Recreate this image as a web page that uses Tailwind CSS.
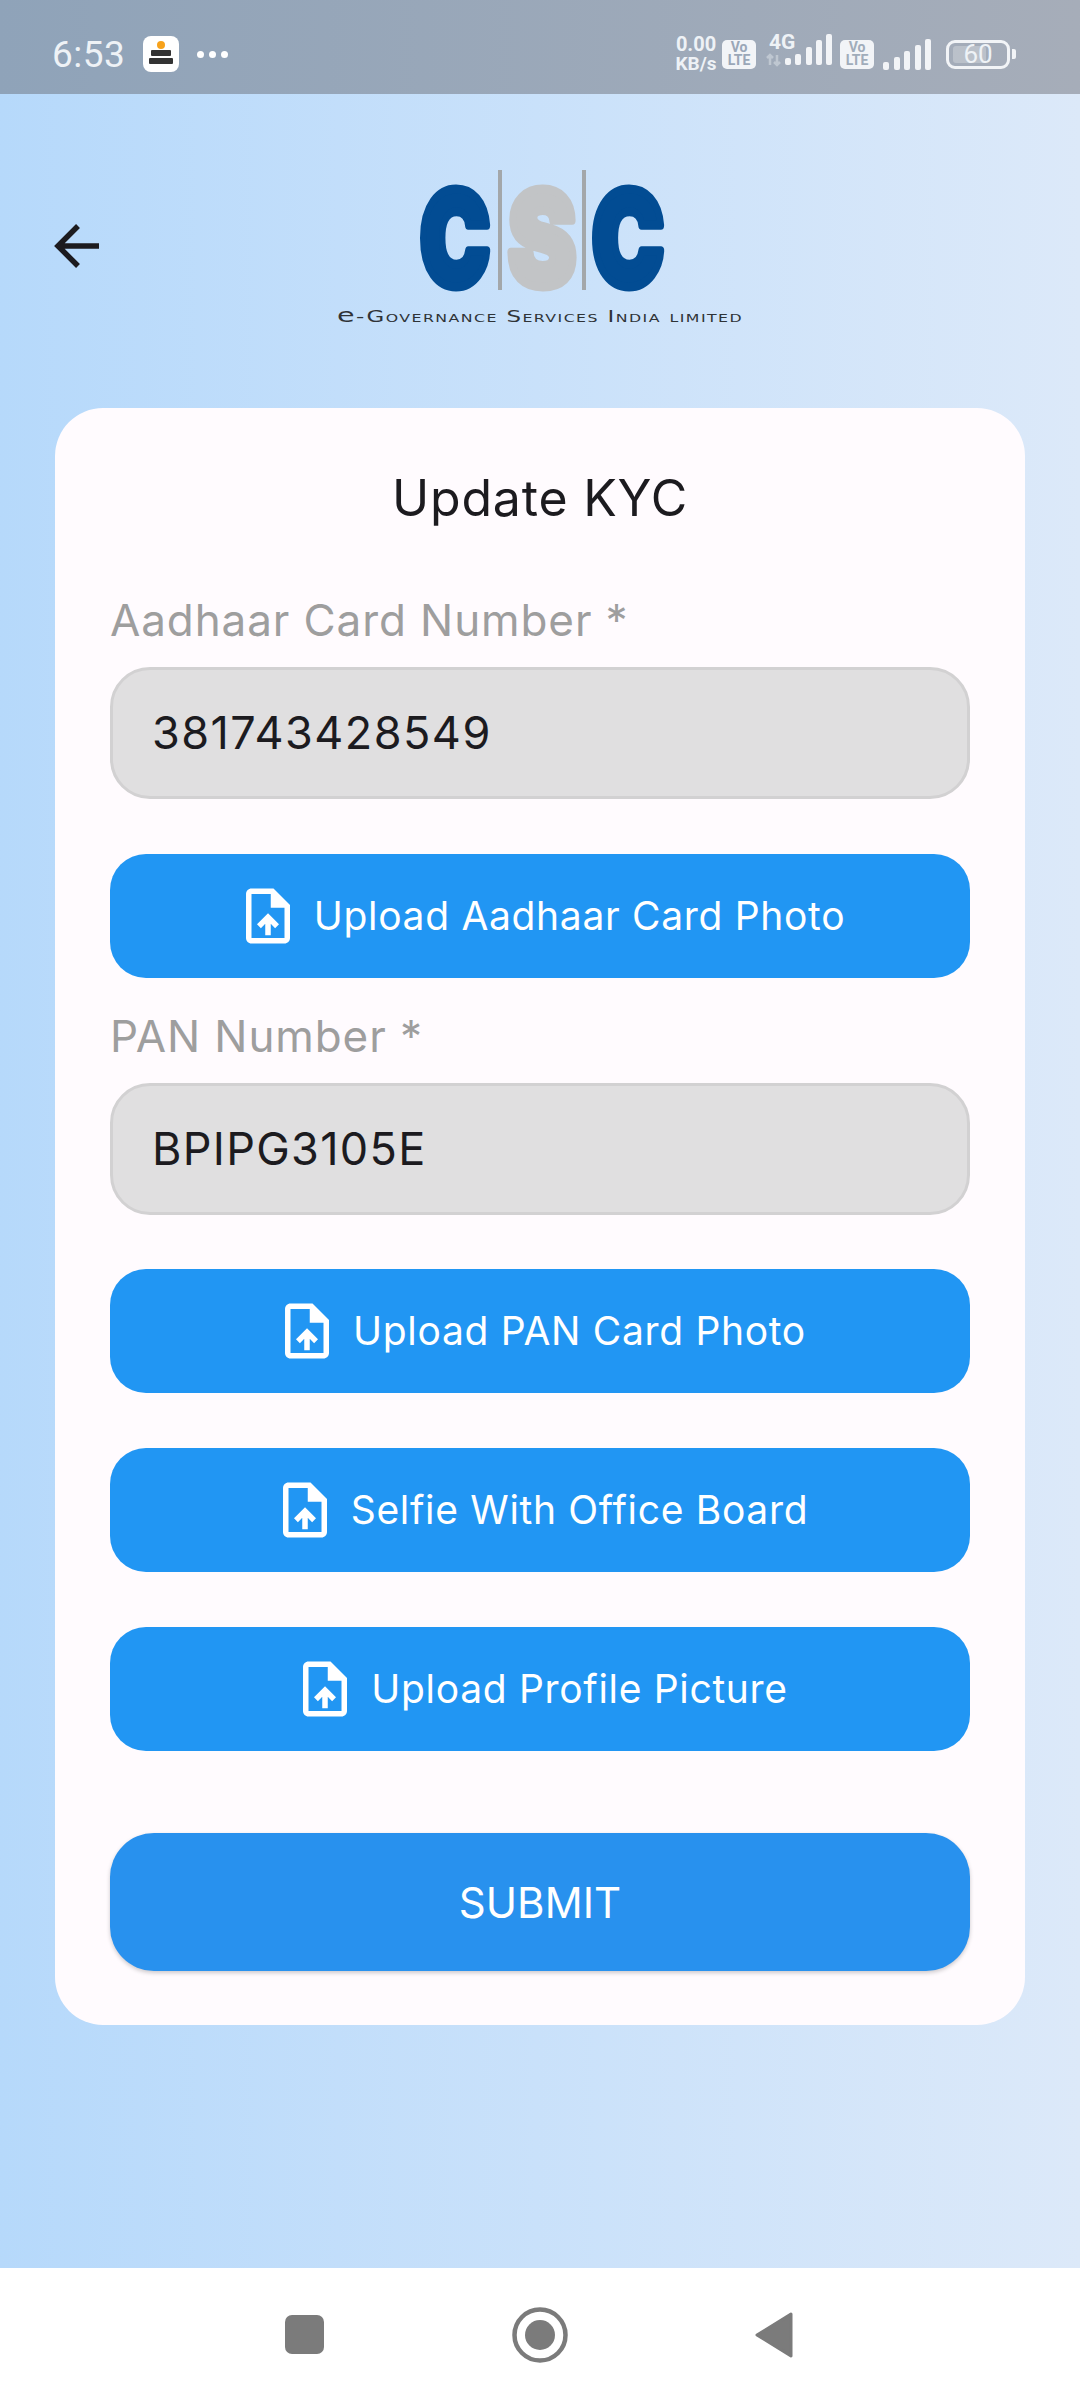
<!DOCTYPE html>
<html lang="en">
<head>
    <meta charset="UTF-8">
    <meta name="viewport" content="width=device-width, initial-scale=1.0">
    <title>Update KYC</title>
    <script src="https://cdn.jsdelivr.net/npm/@tailwindcss/browser@4"></script>
</head>
<body class="w-[1080px] h-[2400px] overflow-hidden flex flex-col bg-white font-['Inter',sans-serif]">

    <!-- Status bar -->
    <div class="h-[94px] shrink-0 flex items-center justify-between pt-[14px] pl-[52px] pr-[64px] bg-gradient-to-r from-[#8fa3b9] to-[#a6adb9] text-[#eef2f6]">
        <div class="flex items-center">
            <span class="text-[37px] leading-none font-['Roboto',sans-serif] tracking-[0.5px]">6:53</span>
            <div class="ml-[18px] w-[36px] h-[36px] rounded-[8px] bg-white flex flex-col items-center pt-[5px]">
                <div class="w-[8px] h-[8px] rounded-full bg-[#f7a21b]"></div>
                <div class="w-[20px] h-[6px] mt-[1px] bg-[#333] rounded-[1px]"></div>
                <div class="w-[24px] h-[6px] mt-[2px] bg-[#333] rounded-[1px]"></div>
            </div>
            <div class="ml-[18px] flex gap-[5px]">
                <div class="w-[7px] h-[7px] rounded-full bg-white"></div>
                <div class="w-[7px] h-[7px] rounded-full bg-white"></div>
                <div class="w-[7px] h-[7px] rounded-full bg-white"></div>
            </div>
        </div>
        <div class="flex items-center">
            <div class="flex flex-col items-center font-['Roboto',sans-serif] font-bold text-[20px] leading-[19px] w-[44px]">
                <span>0.00</span>
                <span class="text-[19px]">KB/s</span>
            </div>
            <div class="ml-[4px] w-[34px] h-[29px] rounded-[5px] bg-[#f2f4f7] flex flex-col items-center justify-center text-[#9aa7b8] text-[14px] leading-[13px] font-bold font-['Roboto',sans-serif]">
                <span>Vo</span><span>LTE</span>
            </div>
            <div class="relative ml-[9px] w-[76px] h-[40px]">
                <span class="absolute left-[4px] top-[-2px] text-[21px] leading-none font-bold font-['Roboto',sans-serif]">4G</span>
                <svg class="absolute left-0 top-0" width="76" height="40" viewBox="0 0 76 40">
                    <path d="M5 31V21M2 24l3-3 3 3M12 21v10M9 28l3 3 3-3" stroke="#eef2f6" stroke-opacity="0.4" stroke-width="2.5" fill="none"/>
                    <g fill="#f2f4f7">
                        <rect x="20" y="24" width="6" height="7" rx="2"/>
                        <rect x="30" y="20" width="6" height="11" rx="2"/>
                        <rect x="41" y="13" width="6" height="18" rx="2"/>
                        <rect x="51" y="6" width="6" height="25" rx="2"/>
                        <rect x="61" y="0" width="6" height="31" rx="2"/>
                    </g>
                </svg>
            </div>
            <div class="ml-[-1px] w-[34px] h-[29px] rounded-[5px] bg-[#f2f4f7] flex flex-col items-center justify-center text-[#a0acba] text-[14px] leading-[13px] font-bold font-['Roboto',sans-serif]">
                <span>Vo</span><span>LTE</span>
            </div>
            <svg class="ml-[9px]" width="49" height="31" viewBox="0 0 49 31">
                <g fill="#f2f4f7">
                    <rect x="0" y="23" width="6" height="8" rx="2"/>
                    <rect x="11" y="18" width="6" height="13" rx="2"/>
                    <rect x="21" y="12" width="6" height="19" rx="2"/>
                    <rect x="32" y="6" width="6" height="25" rx="2"/>
                    <rect x="42" y="0" width="6" height="31" rx="2"/>
                </g>
            </svg>
            <div class="ml-[14px] relative w-[64px] h-[29px] rounded-[9px] border-[3px] border-[#f2f4f7] flex items-center justify-center">
                <div class="absolute left-[4px] top-[3px] bottom-[3px] w-[33px] rounded-[3px] bg-white/25"></div>
                <span class="relative text-[26px] leading-none font-['Roboto',sans-serif]">60</span>
            </div>
            <div class="ml-[2px] w-[4px] h-[10px] rounded-r-[2px] bg-[#f2f4f7]"></div>
        </div>
    </div>

    <!-- Page -->
    <div class="h-[2174px] shrink-0 bg-gradient-to-r from-[#b6d9fb] to-[#dce9f9] flex flex-col">
        <!-- Header with logo -->
        <div class="relative h-[314px] shrink-0">
            <svg class="absolute left-[53px] top-[130px]" width="48" height="44" viewBox="0 0 48 44" fill="none" stroke="#1c1b1f" stroke-width="5.5">
                <path d="M46 22H7M25 2L5 22l20 20"/>
            </svg>
            <svg class="absolute left-[330px] top-[70px]" width="420" height="170" viewBox="0 0 420 170">
                <g font-family="'Inter',sans-serif" font-weight="900" font-size="88" stroke-width="6" stroke-linejoin="round">
                    <text transform="translate(90 122) scale(1 1.5)" textLength="70" lengthAdjust="spacingAndGlyphs" fill="#024c93" stroke="#024c93">C</text>
                    <text transform="translate(178 122) scale(1 1.5)" textLength="68" lengthAdjust="spacingAndGlyphs" fill="#c2c4c6" stroke="#c2c4c6">S</text>
                    <text transform="translate(262 122) scale(1 1.5)" textLength="72" lengthAdjust="spacingAndGlyphs" fill="#024c93" stroke="#024c93">C</text>
                </g>
                <rect x="168" y="6" width="4" height="120" fill="#a3a7aa"/>
                <rect x="252" y="6" width="4" height="120" fill="#a3a7aa"/>
                <text x="7" y="158" textLength="406" lengthAdjust="spacingAndGlyphs" font-family="'DejaVu Sans',sans-serif" font-size="16" letter-spacing="1" fill="#2f3337" style="font-variant:small-caps"><tspan font-size="20" style="font-variant:normal">e</tspan>-Governance Services India limited</text>
            </svg>
        </div>

        <!-- Card -->
        <div class="mx-[55px] h-[1617px] rounded-[48px] bg-[#fffbfe] px-[55px] flex flex-col">
            <h1 class="mt-[65px] h-[50px] text-center text-[#1c1b1f] text-[50px] leading-[50px] tracking-[0.8px]">Update KYC</h1>

            <label class="mt-[70px] h-[54px] text-[#9e9e9e] text-[44px] leading-[54px] tracking-[0.9px]">Aadhaar Card Number *</label>
            <div class="mt-[20px] h-[132px] rounded-[40px] bg-[#e0dfe0] border-[3px] border-[#d2d1d2] flex items-center pl-[39px] text-[#1c1b1f] text-[45px] tracking-[1.45px]">381743428549</div>

            <button class="mt-[55px] h-[124px] rounded-[36px] bg-[#2196f3] text-white flex items-center justify-center gap-[13px] text-[39px] tracking-[0.68px]">
                <svg width="66" height="66" viewBox="0 0 24 24" fill="currentColor"><path d="M14 2H6c-1.1 0-1.99.9-1.99 2L4 20c0 1.1.89 2 1.99 2H18c1.1 0 2-.9 2-2V8l-6-6zm4 18H6V4h7v5h5v11zM8 15.01l1.41 1.41L11 14.84V19h2v-4.16l1.59 1.59L16 15.01 12.01 11 8 15.01z"/></svg>
                Upload Aadhaar Card Photo
            </button>

            <label class="mt-[31px] h-[54px] text-[#9e9e9e] text-[44px] leading-[54px] tracking-[0.9px]">PAN Number *</label>
            <div class="mt-[20px] h-[132px] rounded-[40px] bg-[#e0dfe0] border-[3px] border-[#d2d1d2] flex items-center pl-[39px] text-[#1c1b1f] text-[45px] tracking-[1.3px]">BPIPG3105E</div>

            <button class="mt-[54px] h-[124px] rounded-[36px] bg-[#2196f3] text-white flex items-center justify-center gap-[13px] text-[39px] tracking-[0.68px]">
                <svg width="66" height="66" viewBox="0 0 24 24" fill="currentColor"><path d="M14 2H6c-1.1 0-1.99.9-1.99 2L4 20c0 1.1.89 2 1.99 2H18c1.1 0 2-.9 2-2V8l-6-6zm4 18H6V4h7v5h5v11zM8 15.01l1.41 1.41L11 14.84V19h2v-4.16l1.59 1.59L16 15.01 12.01 11 8 15.01z"/></svg>
                Upload PAN Card Photo
            </button>

            <button class="mt-[55px] h-[124px] rounded-[36px] bg-[#2196f3] text-white flex items-center justify-center gap-[13px] text-[39px] tracking-[0.68px]">
                <svg width="66" height="66" viewBox="0 0 24 24" fill="currentColor"><path d="M14 2H6c-1.1 0-1.99.9-1.99 2L4 20c0 1.1.89 2 1.99 2H18c1.1 0 2-.9 2-2V8l-6-6zm4 18H6V4h7v5h5v11zM8 15.01l1.41 1.41L11 14.84V19h2v-4.16l1.59 1.59L16 15.01 12.01 11 8 15.01z"/></svg>
                Selfie With Office Board
            </button>

            <button class="mt-[55px] h-[124px] rounded-[36px] bg-[#2196f3] text-white flex items-center justify-center gap-[13px] text-[39px] tracking-[0.68px]">
                <svg width="66" height="66" viewBox="0 0 24 24" fill="currentColor"><path d="M14 2H6c-1.1 0-1.99.9-1.99 2L4 20c0 1.1.89 2 1.99 2H18c1.1 0 2-.9 2-2V8l-6-6zm4 18H6V4h7v5h5v11zM8 15.01l1.41 1.41L11 14.84V19h2v-4.16l1.59 1.59L16 15.01 12.01 11 8 15.01z"/></svg>
                Upload Profile Picture
            </button>

            <button class="mt-[82px] h-[138px] rounded-[44px] bg-[#2891ee] text-white text-[42px] tracking-[0.1px] shadow-[0_2px_4px_rgba(0,0,0,0.2)]">SUBMIT</button>
        </div>
    </div>

    <!-- Nav bar -->
    <div class="h-[132px] shrink-0 bg-white relative">
        <div class="absolute left-[285px] top-[47px] w-[39px] h-[39px] rounded-[7px] bg-[#7b7b7b]"></div>
        <svg class="absolute left-[510px] top-[37px]" width="60" height="60" viewBox="0 0 60 60">
            <circle cx="30" cy="30" r="25.5" fill="none" stroke="#7b7b7b" stroke-width="4.5"/>
            <circle cx="30" cy="30" r="15" fill="#7b7b7b"/>
        </svg>
        <svg class="absolute left-[751px] top-[42px]" width="42" height="50" viewBox="0 0 42 50">
            <path d="M40 4L6 25l34 21z" fill="#7b7b7b" stroke="#7b7b7b" stroke-width="3" stroke-linejoin="round"/>
        </svg>
    </div>
</body>
</html>
